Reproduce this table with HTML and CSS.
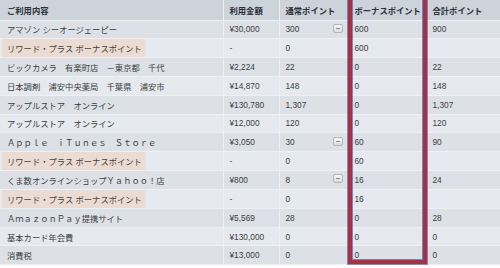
FILE: index.html
```html
<!DOCTYPE html>
<html lang="ja">
<head>
<meta charset="utf-8">
<link rel="stylesheet" href="styles.css">
</head>
<body>
<div class="wrap">
<table class="tbl">
<colgroup><col class="c1"><col class="c2"><col class="c3"><col class="c4"><col class="c5"></colgroup>
<thead>
<tr><th>ご利用内容</th><th>利用金額</th><th>通常ポイント</th><th>ボーナスポイント</th><th>合計ポイント</th></tr>
</thead>
<tbody>
<tr><td>アマゾン シーオージェーピー</td><td>¥30,000</td><td><div class="pt"><span>300</span><span class="btn"></span></div></td><td>600</td><td>900</td></tr>
<tr><td><span class="rw">リワード・プラス ボーナスポイント</span></td><td>-</td><td>0</td><td>600</td><td></td></tr>
<tr><td>ビックカメラ　有楽町店　－東京都　千代</td><td>¥2,224</td><td>22</td><td>0</td><td>22</td></tr>
<tr><td>日本調剤　浦安中央薬局　千葉県　浦安市</td><td>¥14,870</td><td>148</td><td>0</td><td>148</td></tr>
<tr><td>アップルストア　オンライン</td><td>¥130,780</td><td>1,307</td><td>0</td><td>1,307</td></tr>
<tr><td>アップルストア　オンライン</td><td>¥12,000</td><td>120</td><td>0</td><td>120</td></tr>
<tr><td>Ａｐｐｌｅ　ｉＴｕｎｅｓ　Ｓｔｏｒｅ</td><td>¥3,050</td><td><div class="pt"><span>30</span><span class="btn"></span></div></td><td>60</td><td>90</td></tr>
<tr><td><span class="rw">リワード・プラス ボーナスポイント</span></td><td>-</td><td>0</td><td>60</td><td></td></tr>
<tr><td>くま数オンラインショップＹａｈｏｏ！店</td><td>¥800</td><td><div class="pt"><span>8</span><span class="btn"></span></div></td><td>16</td><td>24</td></tr>
<tr><td><span class="rw">リワード・プラス ボーナスポイント</span></td><td>-</td><td>0</td><td>16</td><td></td></tr>
<tr><td>ＡｍａｚｏｎＰａｙ提携サイト</td><td>¥5,569</td><td>28</td><td>0</td><td>28</td></tr>
<tr><td>基本カード年会費</td><td>¥130,000</td><td>0</td><td>0</td><td>0</td></tr>
<tr><td>消費税</td><td>¥13,000</td><td>0</td><td>0</td><td>0</td></tr>
</tbody>
</table>
<div class="frame"></div>
</div>
</body>
</html>
```
FILE: styles.css
```css
html, body { margin: 0; padding: 0; background: #ffffff; }
body { width: 500px; height: 268px; overflow: hidden; }
.wrap { position: relative; width: 500px; }
.tbl {
  width: 500px;
  table-layout: fixed;
  border-collapse: collapse;
  font-family: "Liberation Sans", "Noto Sans CJK JP", sans-serif;
  font-size: 8.3px;
  color: #3a3d42;
}
.c1 { width: 223px; }
.c2 { width: 56px; }
.c3 { width: 69px; }
.c4 { width: 78px; }
.c5 { width: 74px; }
.tbl th, .tbl td {
  border: 1px solid #eef0f3;
  padding: 0 0 0 6px;
  text-align: left;
  vertical-align: middle;
  white-space: nowrap;
  overflow: hidden;
}
.tbl td:first-child, .tbl th:first-child { padding-left: 7px; border-left: 0; }
.tbl th:last-child, .tbl td:last-child { border-right: 0; }
.tbl thead tr { height: 20px; }
.tbl th {
  background: #cdd3da;
  font-weight: bold;
  color: #2c3038;
  border-top: 0;
}
.tbl tbody tr { height: 18.77px; }
.tbl tbody tr:nth-child(odd) td { background: #dde1e6; }
.tbl tbody tr:nth-child(even) td { background: #e6e9ed; }
.rw {
  display: inline-block;
  background: #eadcd2;
  margin-left: -5px;
  padding: 3px 3px 3px 5px;
  color: #4a3f3a;
}
.pt {
  display: flex;
  justify-content: space-between;
  align-items: center;
  padding-right: 5px;
}
.btn {
  width: 8px;
  height: 7px;
  border: 1px solid #b4b6ba;
  border-radius: 2px;
  background: linear-gradient(#f6f6f6, #d9dbde);
  position: relative;
  margin-top: -2px;
}
.btn::after {
  content: "";
  position: absolute;
  left: 2px;
  right: 2px;
  top: 3px;
  height: 1px;
  background: #8a8c90;
}
.frame {
  position: absolute;
  left: 348px;
  top: -6px;
  width: 71px;
  height: 262px;
  border: 4px solid #a2324a;
  box-shadow: 0 0 0 1px rgba(70, 60, 120, 0.55), inset 0 0 0 1px rgba(80, 90, 170, 0.7);
  pointer-events: none;
}
```
